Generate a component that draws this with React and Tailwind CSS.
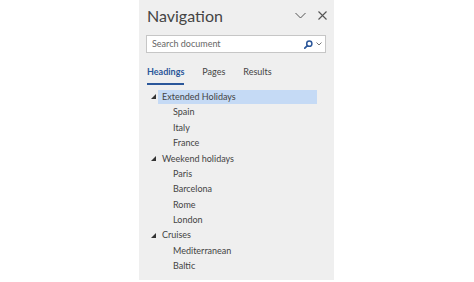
const TREE = [
  { label: 'Extended Holidays', children: ['Spain', 'Italy', 'France'], selected: true },
  { label: 'Weekend holidays', children: ['Paris', 'Barcelona', 'Rome', 'London'] },
  { label: 'Cruises', children: ['Mediterranean', 'Baltic'] },
];

const Caret = () => (
  <svg width="5" height="5" viewBox="0 0 5 5" className="shrink-0">
    <path d="M5 0 L5 5 L0 5 Z" fill="#333" />
  </svg>
);

export default function App() {
  return (
    <div className="w-[474px] h-[282px] bg-white flex" style={{ fontFamily: 'Lato, "Open Sans", sans-serif' }}>
      <div className="ml-[139px] w-[195px] h-[280px] bg-[#efefef] flex flex-col">
        {/* Header */}
        <div className="flex items-center pl-[8px] pr-[7px] h-[31px]">
          <p className="flex-1 text-[16px] text-[#444] leading-none">Navigation</p>
          <svg width="11" height="7" viewBox="0 0 11 7" className="mr-[12px]">
            <path d="M0.5 1 L5.5 6 L10.5 1" fill="none" stroke="#555" strokeWidth="1" />
          </svg>
          <svg width="9" height="9" viewBox="0 0 9 9">
            <path d="M0.5 0.5 L8.5 8.5 M8.5 0.5 L0.5 8.5" fill="none" stroke="#555" strokeWidth="1.1" />
          </svg>
        </div>

        {/* Search */}
        <div className="ml-[7px] mr-[8px] mt-[4px] h-[18px] bg-white border border-[#c6c6c6] flex items-center pl-[5px] pr-[3px]">
          <span className="flex-1 text-[9px] text-[#666]">Search document</span>
          <svg width="9" height="9" viewBox="0 0 9 9">
            <circle cx="5.3" cy="3.7" r="2.6" fill="none" stroke="#2b579a" strokeWidth="1.5" />
            <path d="M3.4 5.6 L0.8 8.2" stroke="#2b579a" strokeWidth="1.7" strokeLinecap="round" />
          </svg>
          <svg width="6" height="4" viewBox="0 0 6 4" className="ml-[3px]">
            <path d="M0.5 0.5 L3 3 L5.5 0.5" fill="none" stroke="#777" strokeWidth="1" />
          </svg>
        </div>

        {/* Tabs */}
        <div className="flex items-start gap-[18px] px-[8px] mt-[13px] text-[9px] leading-[12px]">
          <div className="flex flex-col">
            <span className="font-bold text-[#2b579a]">Headings</span>
            <div className="h-[2px] bg-[#2b579a] mt-[5px]" />
          </div>
          <span className="text-[#444]">Pages</span>
          <span className="text-[#444]">Results</span>
        </div>

        {/* Tree */}
        <div className="mt-[4px] flex flex-col text-[9px] text-[#444]">
          {TREE.map((g) => (
            <div key={g.label} className="flex flex-col">
              <div className="flex items-center h-[15.4px] pl-[12px]">
                <Caret />
                <div className={`ml-[2px] pl-[4px] w-[159px] h-[14px] flex items-center ${g.selected ? 'bg-[#c5daf5]' : ''}`}>
                  {g.label}
                </div>
              </div>
              {g.children.map((c) => (
                <div key={c} className="flex items-center h-[15.4px] pl-[34px]">{c}</div>
              ))}
            </div>
          ))}
        </div>
      </div>
    </div>
  );
}
